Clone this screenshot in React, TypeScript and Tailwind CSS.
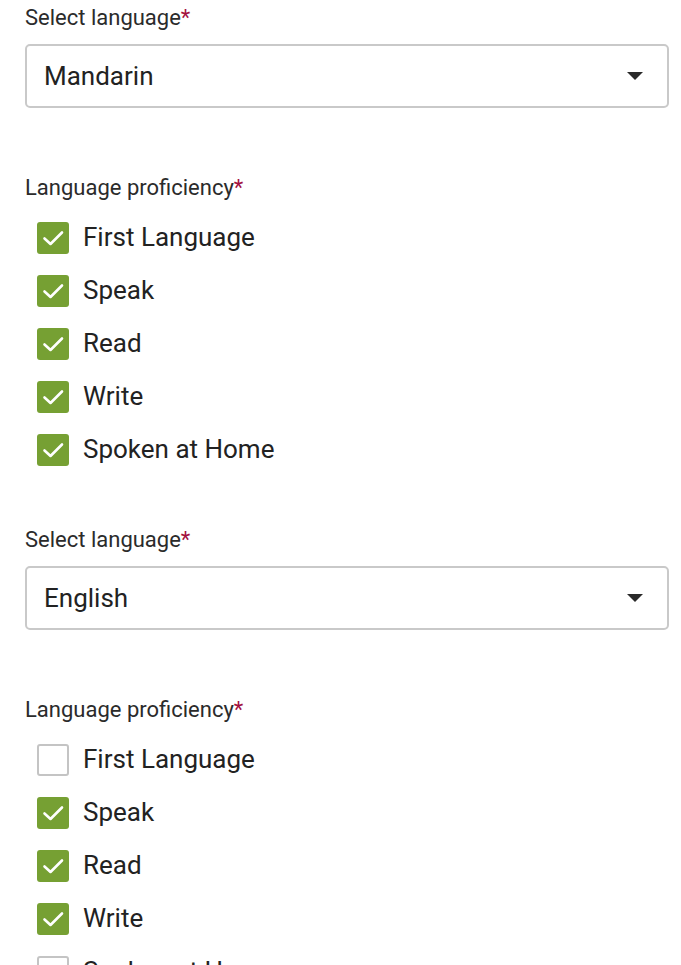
import React from "react";

const Check = ({ checked }: { checked: boolean }) =>
  checked ? (
    <div className="w-[32px] h-[32px] rounded-[3px] bg-[#76a033] flex items-center justify-center shrink-0">
      <svg width="24" height="24" viewBox="0 0 24 24" fill="none">
        <path d="M3.5 12.5 L9.5 18 L21 6.5" stroke="#ffffff" strokeWidth="2.6" strokeLinecap="round" strokeLinejoin="round" />
      </svg>
    </div>
  ) : (
    <div className="w-[32px] h-[32px] rounded-[3px] bg-white border-2 border-[#c4c4c4] shrink-0" />
  );

const Label = ({ text }: { text: string }) => (
  <div className="text-[22px] leading-[24px] text-[#2b2b2b]">
    {text}
    <span className="text-[#a3123f]">*</span>
  </div>
);

const Block = ({ lang, checks }: { lang: string; checks: boolean[] }) => {
  const items = ["First Language", "Speak", "Read", "Write", "Spoken at Home"];
  return (
    <div className="flex flex-col">
      <Label text="Select language" />
      <div className="mt-[14px] h-[64px] border-2 border-[#c9c9c9] rounded-[5px] flex items-center justify-between pl-[17px] pr-[24px] bg-white">
        <span className="text-[26px] text-[#222]">{lang}</span>
        <svg width="16" height="9" viewBox="0 0 16 9">
          <path d="M0 0 L16 0 L8 8 Z" fill="#2a2a2a" />
        </svg>
      </div>
      <div className="mt-[68px]">
        <Label text="Language proficiency" />
      </div>
      <div className="mt-[11px] flex flex-col">
        {items.map((it, i) => (
          <div key={it} className="h-[53px] flex items-center pl-[12px] gap-[14px]">
            <Check checked={checks[i]} />
            <span className="text-[26px] text-[#222]">{it}</span>
          </div>
        ))}
      </div>
    </div>
  );
};

export default function App() {
  return (
    <div
      className="w-[681px] h-[965px] overflow-hidden bg-white pl-[25px] pr-[12px] pt-[6px] flex flex-col gap-[52px]"
      style={{ fontFamily: "Roboto, 'Liberation Sans', sans-serif" }}
    >
      <Block lang="Mandarin" checks={[true, true, true, true, true]} />
      <Block lang="English" checks={[false, true, true, true, false]} />
    </div>
  );
}
